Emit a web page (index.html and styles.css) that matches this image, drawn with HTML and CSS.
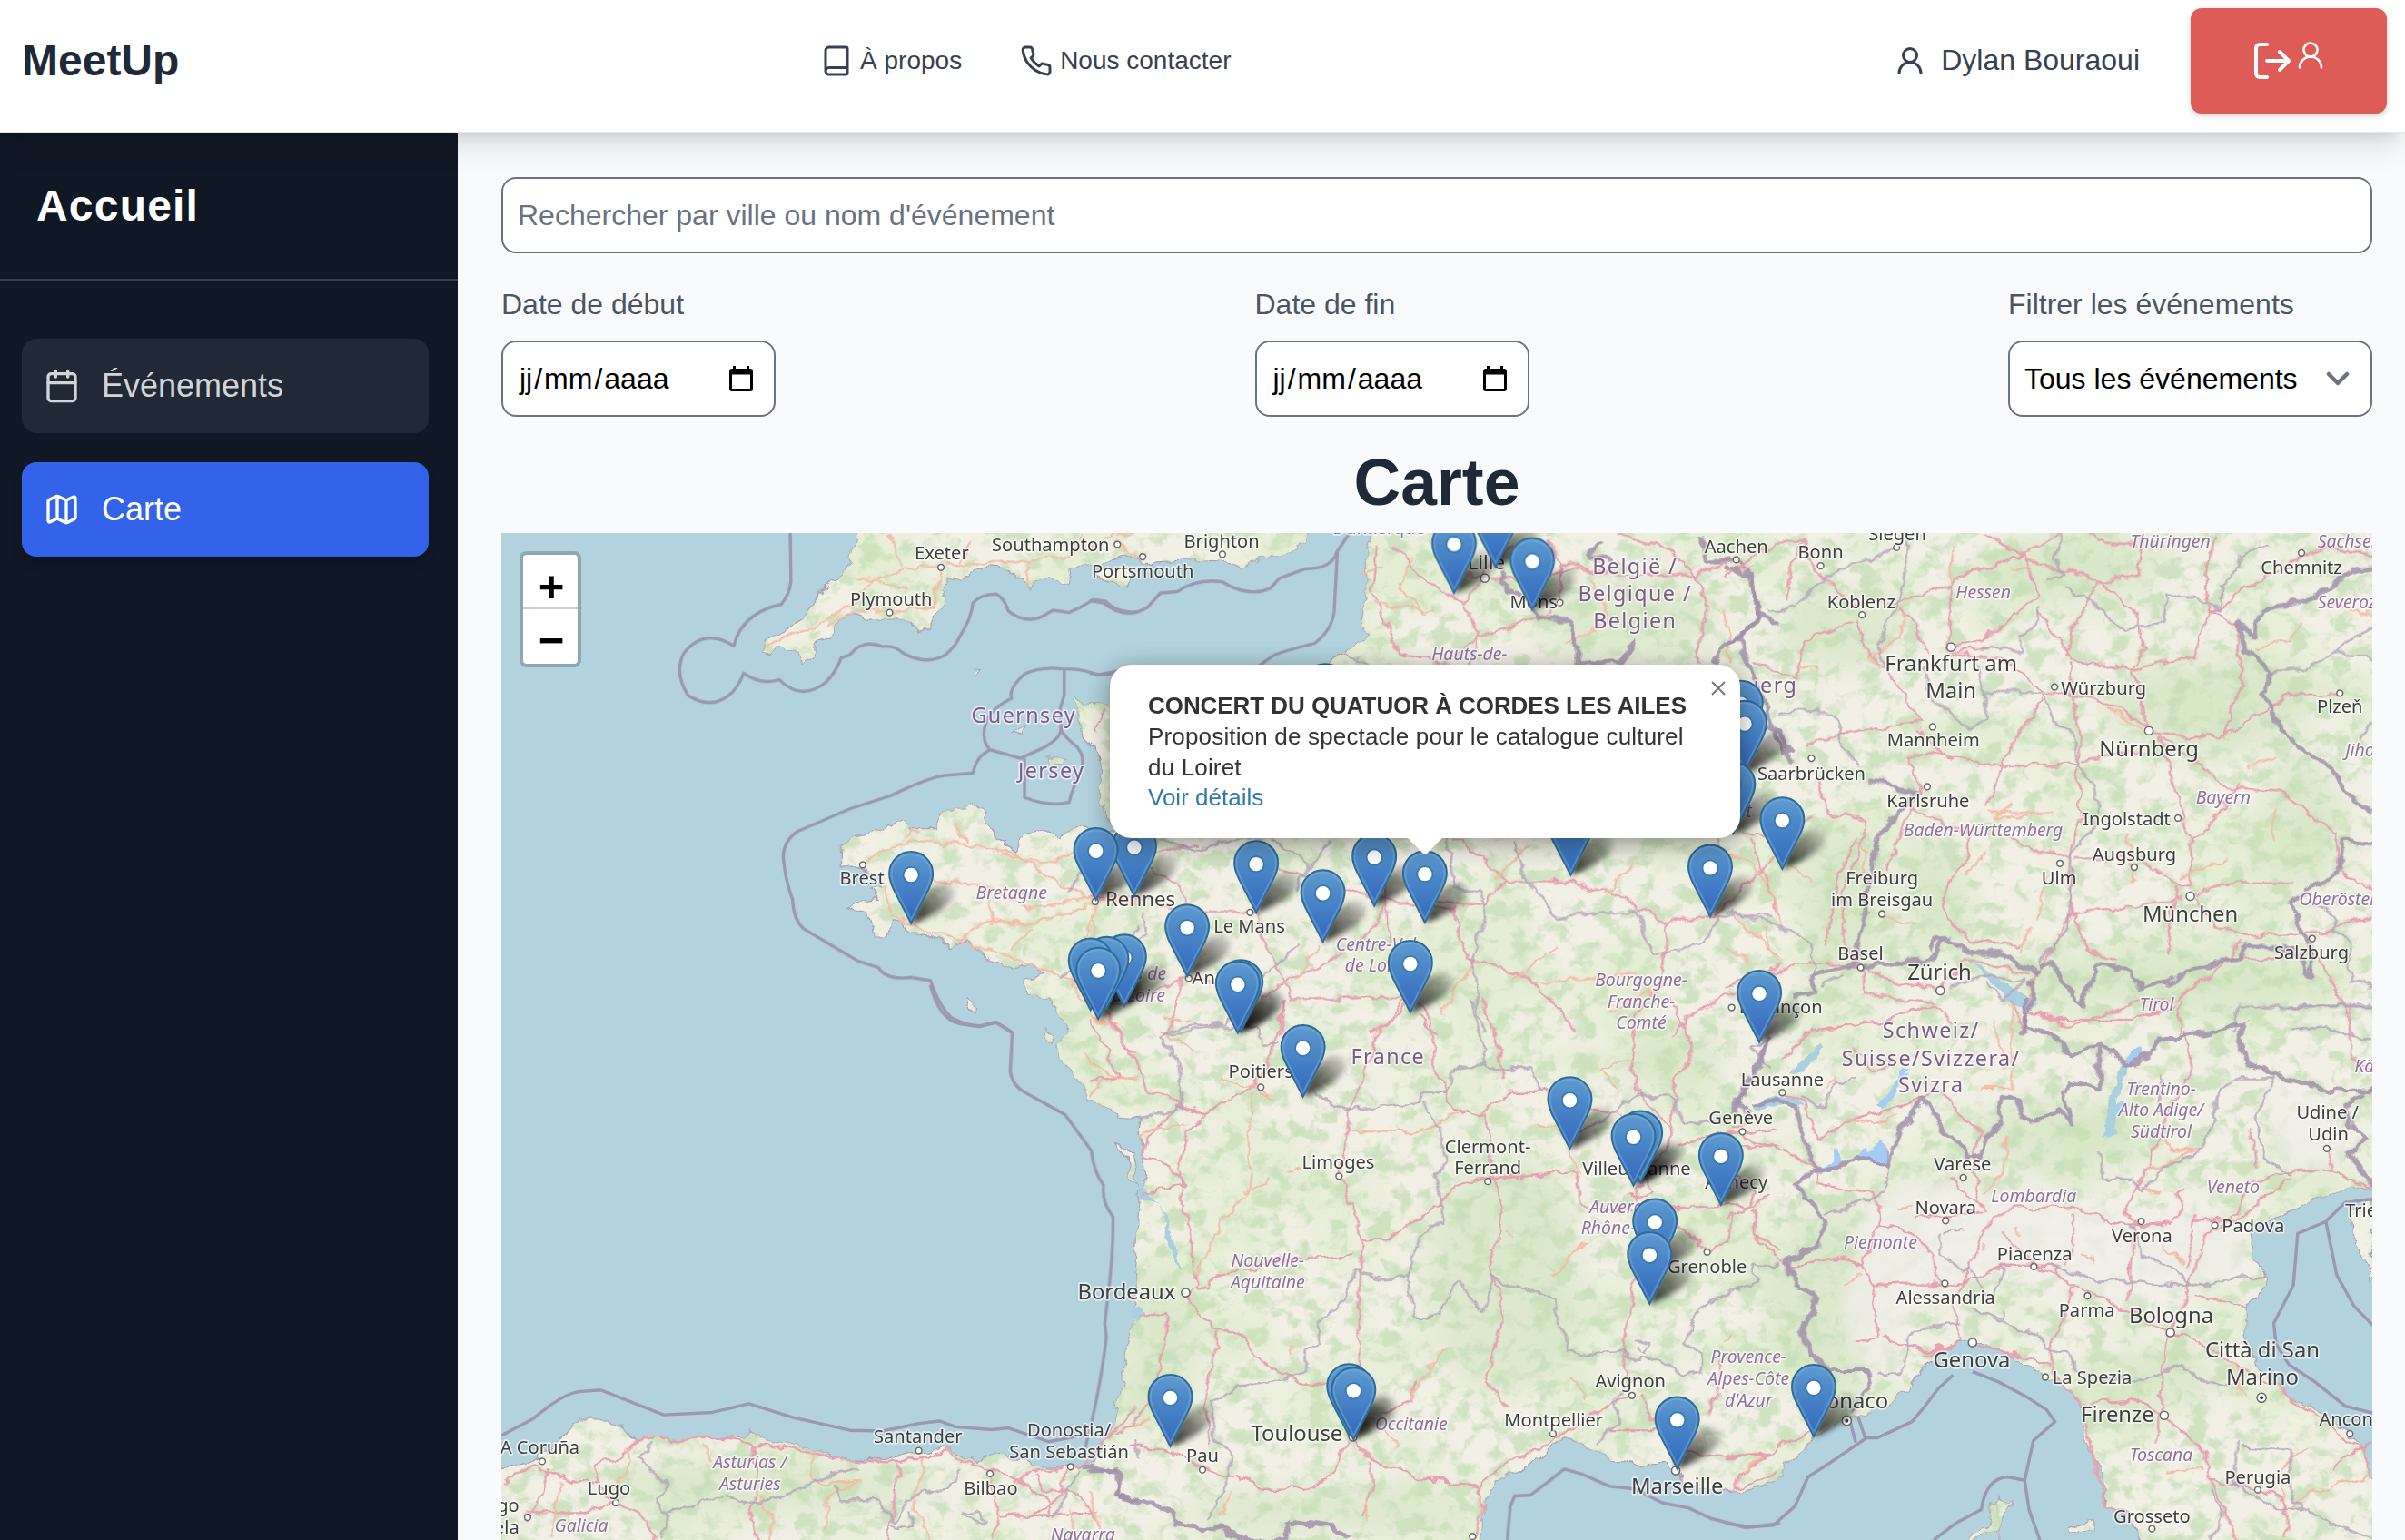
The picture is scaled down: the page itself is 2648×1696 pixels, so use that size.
FILE: index.html
```html
<!DOCTYPE html>
<html lang="fr">
<head>
<meta charset="utf-8">
<title>MeetUp – Carte</title>
<link rel="stylesheet" href="styles.css">
</head>
<body>
<header class="topbar">
  <div class="brand">MeetUp</div>
  <nav class="topnav">
    <a class="toplink"><svg class="icon" width="36" height="36" viewBox="0 0 24 24"><path d="M4 19.5v-15A2.5 2.5 0 0 1 6.5 2H19a1 1 0 0 1 1 1v18a1 1 0 0 1-1 1H6.5a1 1 0 0 1 0-5H20"/></svg>À propos</a>
    <a class="toplink"><svg class="icon" width="36" height="36" viewBox="0 0 24 24"><path d="M22 16.92v3a2 2 0 0 1-2.18 2 19.79 19.79 0 0 1-8.63-3.07 19.5 19.5 0 0 1-6-6 19.79 19.79 0 0 1-3.07-8.67A2 2 0 0 1 4.11 2h3a2 2 0 0 1 2 1.72 12.84 12.84 0 0 0 .7 2.81 2 2 0 0 1-.45 2.11L8.09 9.91a16 16 0 0 0 6 6l1.27-1.27a2 2 0 0 1 2.11-.45 12.84 12.84 0 0 0 2.81.7A2 2 0 0 1 22 16.92z"/></svg>Nous contacter</a>
  </nav>
  <div class="account">
    <div class="user"><svg class="icon" width="36" height="36" viewBox="0 0 24 24"><circle cx="12" cy="8" r="5"/><path d="M20 21a8 8 0 0 0-16 0"/></svg>Dylan Bouraoui</div>
    <button class="logout" aria-label="Déconnexion">
      <svg class="icon" width="48" height="48" viewBox="0 0 24 24"><path d="M9 21H5a2 2 0 0 1-2-2V5a2 2 0 0 1 2-2h4M16 17l5-5-5-5M21 12H9"/></svg>
      <svg class="icon thin" width="36" height="36" viewBox="0 0 24 24"><circle cx="12" cy="8" r="5"/><path d="M20 21a8 8 0 0 0-16 0"/></svg>
    </button>
  </div>
</header>
<div class="shell">
  <aside class="sidebar">
    <div class="side-head">Accueil</div>
    <nav class="side-nav">
      <a class="side-item"><svg class="icon" width="40" height="40" viewBox="0 0 24 24"><rect x="3" y="4" width="18" height="18" rx="2"/><path d="M16 2v4M8 2v4M3 10h18"/></svg>Événements</a>
      <a class="side-item active"><svg class="icon" width="40" height="40" viewBox="0 0 24 24"><path d="M14.106 5.553a2 2 0 0 0 1.788 0l3.659-1.83A1 1 0 0 1 21 4.619v12.764a1 1 0 0 1-.553.894l-4.553 2.277a2 2 0 0 1-1.788 0l-4.212-2.106a2 2 0 0 0-1.788 0l-3.659 1.83A1 1 0 0 1 3 19.381V6.618a1 1 0 0 1 .553-.894l4.553-2.277a2 2 0 0 1 1.788 0zM15 5.764v15M9 3.236v15"/></svg>Carte</a>
    </nav>
  </aside>
  <main class="content">
    <div class="field search">Rechercher par ville ou nom d'événement</div>
    <div class="filters">
      <div class="filter"><span class="label">Date de début</span>
        <div class="field date"><span><i>jj</i>/<i>mm</i>/<i>aaaa</i></span><svg width="26" height="28" viewBox="0 0 26 28"><path fill-rule="evenodd" d="M4 0h3v3h12V0h3v3h1a3 3 0 0 1 3 3v19a3 3 0 0 1-3 3H3a3 3 0 0 1-3-3V6a3 3 0 0 1 3-3h1zM3 9.500v15.500h20V9.500z"/></svg></div></div>
      <div class="filter"><span class="label">Date de fin</span>
        <div class="field date"><span><i>jj</i>/<i>mm</i>/<i>aaaa</i></span><svg width="26" height="28" viewBox="0 0 26 28"><path fill-rule="evenodd" d="M4 0h3v3h12V0h3v3h1a3 3 0 0 1 3 3v19a3 3 0 0 1-3 3H3a3 3 0 0 1-3-3V6a3 3 0 0 1 3-3h1zM3 9.500v15.500h20V9.500z"/></svg></div></div>
      <div class="filter"><span class="label">Filtrer les événements</span>
        <div class="field select"><span>Tous les événements</span><svg class="icon chevron" width="26" height="16" viewBox="0 0 26 16"><path d="M3 3l10 10L23 3"/></svg></div></div>
    </div>
    <h1>Carte</h1>
    <div class="map">
      <svg class="tiles" viewBox="326.86 347.59 1219.81 656.7" preserveAspectRatio="none">
        <defs>
          <filter id="rough" filterUnits="userSpaceOnUse" x="310" y="330" width="1260" height="700"><feTurbulence type="fractalNoise" baseFrequency=".09" numOctaves="3" seed="4"/><feDisplacementMap in="SourceGraphic" scale="8" xChannelSelector="R" yChannelSelector="G"/></filter>
          <filter id="woods" filterUnits="userSpaceOnUse" x="320" y="340" width="1235" height="670" color-interpolation-filters="sRGB"><feTurbulence type="fractalNoise" baseFrequency=".075 .09" numOctaves="5" seed="11"/><feColorMatrix values="0 0 0 0 .77  0 0 0 0 .87  0 0 0 0 .71  0 5 0 0 -2.4"/></filter>
          <filter id="plain" filterUnits="userSpaceOnUse" x="320" y="340" width="1235" height="670" color-interpolation-filters="sRGB"><feTurbulence type="fractalNoise" baseFrequency=".012 .015" numOctaves="3" seed="31"/><feColorMatrix values="0 0 0 0 .88  0 0 0 0 .93  0 0 0 0 .81  5 0 0 0 -2.3"/></filter>
          <filter id="soft" x="-50%" y="-50%" width="200%" height="200%"><feGaussianBlur stdDeviation="1.7"/></filter>
          <linearGradient id="pinfill" x1="0" y1="0" x2="0" y2="1"><stop offset="0" stop-color="#609cd1"/><stop offset=".35" stop-color="#4b88c8"/><stop offset="1" stop-color="#3268bd"/></linearGradient>
          <linearGradient id="shade" x1="0" y1="1" x2="1" y2="0"><stop offset="0" stop-opacity=".85"/><stop offset=".55" stop-opacity=".45"/><stop offset="1" stop-opacity=".05"/></linearGradient>
          <g id="pinshadow" transform="scale(1.184)"><path d="M0 0Q4-17 14-22Q23-25 24-18Q23-9 0 0z" fill="url(#shade)" filter="url(#soft)"/></g>
          <g id="pin" transform="scale(1.184)"><path d="M-12-27.700A12 12 0 0 1 12-27.700C12-24.500 10.800-21.500 9.600-19L0-.3-9.600-19C-10.800-21.500-12-24.500-12-27.700z" fill="url(#pinfill)" stroke="#2e6c97" stroke-width="1"/><path d="M-10.900-27.600A10.900 10.900 0 0 1 10.900-27.600C10.900-24.500 9.800-21.800 8.600-19.300L0-2.400-8.600-19.300C-9.800-21.800-10.900-24.500-10.900-27.600z" fill="none" stroke="#7fb2de" stroke-opacity=".45"/><circle cy="-27" r="4.300" fill="#fff" stroke="#3c79ae" stroke-width=".9"/></g>
          <path id="continent" d="M900 340L890 357L891 386L887 409L894 414L884 417L878 426L865 434L850 445L815 470L790 485L745 475L735 460L723 460L708 459L700 454L704 468L706 481L714 489L718 504L718 519L722 534L728 542L716 543L705 538L697 540L692 546L678 541L668 544L660 555L651 546L641 532L635 525L628 529L614 529L610 540L599 540L595 543L589 536L575 541L559 545L548 551L548 565L560 564L573 572L574 580L567 580L571 587L552 591L566 596L570 611L578 611L581 599L589 600L594 610L607 609L620 618L630 612L644 625L655 631L671 629L681 635L668 638L671 648L684 650L689 658L697 672L689 685L697 696L705 708L709 717L723 723L728 729L744 730L742 739L746 748L744 759L748 766L743 776L742 795L741 820L739 847L738 865L732 899L726 930L723 937L713 953L697 957L676 957L665 950L648 948L637 954L626 948L614 944L596 948L581 952L554 951L528 945L499 939L489 933L483 938L446 939L413 939L406 930L390 925L378 925L369 935L356 946L343 955L320 958V1015H964L967 980L977 964L990 960L1009 944L1019 938L1035 944L1052 953L1066 955L1084 955L1095 960L1098 969L1124 973L1142 971L1162 964L1165 953L1180 942L1193 930L1210 923L1230 917L1244 906L1255 890L1272 876L1286 874L1306 881L1323 892L1345 903L1358 917L1361 942L1371 960L1374 982L1388 987L1401 1015H1560V985L1547 964L1540 946L1532 933L1506 917L1484 906L1471 890L1465 872L1464 849L1473 845L1478 834L1468 818L1468 802L1481 795L1509 782L1526 777L1532 772L1555 778V340z"/>
          <path id="england" d="M560 340L555 367L542 382L534 386L530 395L512 412L499 417L497 427L503 427L508 422L519 425L523 433L531 427L532 420L541 415L548 404L557 400L570 404L585 403L595 407L600 412L606 412L608 403L615 394L614 384L619 378L631 375L644 370L656 371L668 378L672 386L674 379L684 378L696 381L699 375L696 372L716 369L735 362L745 367L762 366L780 365L797 366L811 370L824 364L840 360L851 353L857 340z"/>
          <path id="islands" d="M712 372L731 372L739 377L734 382L722 379zM634 436L638 437L635 440zM660 478L668 472L666 479zM683 494L694 494L693 499L684 498zM629 650L637 656L636 660L630 657zM681 671L685 674L686 681L682 677zM1532 790L1547 780V836L1537 812zM1311 980L1302 997L1278 1010H1304L1302 976zM1299 981L1303 980L1304 1010H1284L1286 1000L1296 996zM1349 996L1366 991L1366 998L1350 999zM728 745L738 751L742 773L737 770L736 757z"/>
          <clipPath id="landclip"><use href="#continent"/><use href="#england"/><use href="#islands"/></clipPath>
        </defs>
        <rect x="320" y="340" width="1235" height="670" fill="#b2d2dd"/>
        <g filter="url(#rough)">
          <g class="coast"><use href="#continent"/><use href="#england"/><use href="#islands"/></g>
          <g clip-path="url(#landclip)">
            <rect class="tex" x="320" y="340" width="1235" height="670" filter="url(#plain)"/>
            <g class="forest">
              <ellipse cx="755" cy="880" rx="24" ry="52"/><ellipse cx="1090" cy="690" rx="35" ry="18"/><ellipse cx="1200" cy="590" rx="20" ry="48"/><ellipse cx="1260" cy="580" rx="22" ry="34"/><ellipse cx="1440" cy="460" rx="70" ry="30"/><ellipse cx="1500" cy="535" rx="24" ry="45"/><ellipse cx="1350" cy="372" rx="60" ry="20"/><ellipse cx="1200" cy="410" rx="40" ry="26"/><ellipse cx="1420" cy="640" rx="110" ry="16"/><ellipse cx="980" cy="830" rx="50" ry="80"/><ellipse cx="1190" cy="850" rx="38" ry="60"/><ellipse cx="1340" cy="740" rx="55" ry="24"/><ellipse cx="1400" cy="900" rx="45" ry="20"/><ellipse cx="860" cy="985" rx="90" ry="14"/><ellipse cx="500" cy="970" rx="110" ry="16"/><ellipse cx="1060" cy="400" rx="60" ry="22"/>
            </g>
            <rect class="tex" x="320" y="340" width="1235" height="670" filter="url(#woods)"/>
            <path class="po" d="M1215 790L1245 770L1330 780L1400 790L1460 790L1465 830L1400 850L1310 830L1250 850L1225 905L1200 860zM1490 700L1540 745L1520 765L1480 755z"/>
          </g>
          <path class="water" d="M743 773Q760 785 764 805T771 829Q762 822 760 800T743 783zM735 852l8-1 5 6-8 6zM1374 722l10-30 3 2-6 24-2 22-7-1zM1282 623l20 14 18 13 8 3-2 5-12-1-18-20zM1142 722q14-12 30-6l4 6q-15-5-32 4zM1167 700l20-20 3 3-14 16z"/>
          <path class="ice" d="M1383 692l12-9 4 6-12 7zM1222 718l12-8 8-14 3 1-8 16-10 9zM1180 762l14-5 4-8 3 3-2 8-14 5zM1210 757l6-10 3 5 8-8 4 8-3 8zM1378 724l6-8 2 2-4 10z"/>
        </g>
        <g filter="url(#rough)">
          <!-- Channel and Brittany -->
          <g transform="translate(326.9 343.4) scale(.26436 .21148)">
            <path class="road" d="M1568 0L1520 30L1400 90L1250 110L1100 120M1090 120L1000 125L920 165L860 240L770 310L690 345L650 375M1090 130L1060 250L970 265L880 255L800 310M960 20L985 120M1120 120L1160 40M1305 120L1300 190M1400 95L1440 30M1520 40L1568 100M870 150L1000 200M890 1040L940 1000L1020 970L1120 975L1250 1000L1350 1080L1460 1150L1568 1160M1060 1090L1200 1110L1300 1180L1460 1140M960 1190L1010 1230L1130 1275L1200 1215L1300 1225L1460 1160M1250 1000L1240 1010L1330 1040L1400 1020L1430 980M1110 910L1150 970M1130 1275L1220 1310L1280 1340L1400 1400L1440 1470M1250 1310L1310 1240M1460 1170L1465 1290M1470 1160L1440 1260L1420 1360M1000 960L1030 940M940 1090L960 1180M1200 1110L1210 1230"/>
            <path class="admin" d="M1420 960L1430 1060L1400 1130M1568 1230L1520 1330L1400 1370L1380 1400"/>
          </g>
          <!-- Northern France and Belgium -->
          <g transform="translate(710.6 343.4) scale(.287 .21148)">
            <path class="major" d="M650 60L640 200L680 330L700 380L820 430M850 240L760 170L690 60M850 240L900 130L960 60M850 245L880 330L860 430M1030 280L900 330L800 420M850 150L1000 170L1100 130L1200 150L1380 150M1040 40L1070 110L1200 150M1380 150L1400 250L1380 420M1460 100L1380 150L1300 60L1200 20M1070 110L1060 250L1020 290M830 960L880 1010L940 1090L1100 1100L1200 1140L1310 1220L1420 1200L1568 1000M940 1090L900 1170L760 1150M825 1170L830 1250L860 1330L960 1370L1020 1420L1100 1550M830 1180L700 1160L560 1110L450 1060L380 1040M380 1190L250 1190L120 1150L0 1140M670 960L675 1160L640 1250L540 1340L460 1400L380 1450M675 1160L680 1300M380 1190L390 1280L440 1400L460 1460L620 1450L720 1450M390 1440L300 1420L220 1390L60 1480M210 1390L180 1568M440 1460L430 1568M1310 1220L1300 1400L1240 1500L1230 1568M1410 1190L1440 1080L1420 960M730 1440L640 1568M740 1450L790 1568M1330 1568L1370 1500L1460 1440L1568 1350M1500 960L1540 1100L1568 1200M20 1060L130 1010L250 980M30 560L10 640M220 1180L200 1100L120 1040"/>
            <path class="road" d="M660 120L610 150M730 100L700 180L760 270M640 240L780 260M1140 160L1180 300L1080 360M1440 250L1460 420M920 1090L1000 980M1160 1140L1240 1040M1030 1410L1240 1380M880 1330L800 1500M1460 1200L1568 1330M520 1290L470 1400M1060 1290L960 1400M1180 1500L1290 1420M40 1300L0 1280"/>
            <path class="admin" d="M585 390L650 440M130 960L240 1000L330 960L420 960L500 1050L470 1120L500 1060L540 960M960 960L980 1060L1060 1210L1240 1180L1280 1320L1400 1280L1430 1200L1550 1200M810 960L830 1120L890 1120M890 1120L900 1200L870 1320L880 1500L900 1568M120 1190L130 1260L60 1300M360 1440L420 1340L470 1290M380 1540L280 1540L170 1568"/>
            <path class="country" d="M930 60L940 180L1000 230L1020 280L1090 290L1110 370L1110 440M1110 420L1200 420L1240 350L1200 440M1420 430L1440 360L1480 340L1520 270L1500 150L1470 100L1400 110L1390 30M1568 300L1520 270M1160 40L1140 90L1180 110"/>
          </g>
          <!-- Germany and northern Switzerland -->
          <g transform="translate(1125.1 343.4) scale(.2825 .21148)">
            <path class="major" d="M0 160L60 90L180 30L200 130L290 240L410 230L520 180L530 160L680 90L780 20M180 30L150 130L140 230M300 280L320 370L370 440L430 560L450 600L350 620L260 640L190 680M290 290L180 350L170 460L60 420M400 250L440 300L470 400M520 180L515 280L510 370L590 350L720 220L690 90L600 20M510 390L620 370M690 100L860 170L960 150L960 20M720 270L770 340L790 410L940 440L1080 400L1120 260L1110 150L1130 20M520 390L640 410L740 510L850 530L960 600L1000 640L1140 650L1180 620L1250 560L1300 515L1420 520M730 530L650 700L635 750L600 870M640 740L500 700L420 710L450 800L400 960L370 1060M790 420L800 540L820 640L810 740L820 900L790 1020L720 1000L650 950M810 730L640 740M820 720L960 690M860 170L800 320L780 400M870 170L950 270L970 380L940 440L960 560L980 630M1000 650L1050 860L1075 970L1080 1100L1050 1110L950 1020L800 1020M1000 650L1100 740L1170 810L1280 820L1410 950L1420 1060L1493 1120M1180 800L1100 950L1075 970M500 700L440 620M430 870L560 950L560 1020L510 1100L500 1180L560 1280L680 1290M1080 1130L1150 1100L1310 1095M1080 1140L1130 1230L1220 1260L1400 1250L1430 1215L1493 1210M1040 1110L1020 1320M800 1190L960 1170L1050 1150M790 1020L800 1190L760 1280L700 1410L700 1500M800 1190L840 1310L900 1340M210 780L240 890L330 900L310 1000L270 1120L270 1260L300 1350L380 1400L490 1430L560 1330L700 1380M1120 260L1180 300L1190 480L1150 650M1120 270L1200 190L1320 100L1380 60L1493 90M840 20L900 60L950 50M40 940L100 960L200 900M300 960L260 1080L230 1290M0 1420L100 1380L200 1340L310 1360L320 1440L480 1470L520 1540M700 1500L800 1540L960 1460L1040 1460L1160 1340L1190 1280M1050 1460L1050 1568M1350 1290L1400 1400L1450 1568M660 1460L690 1568M1150 1340L1340 1320"/>
            <path class="road" d="M60 120L0 140M410 270L400 340L330 400L360 440M530 60L520 180M700 120L660 130M880 560L960 620M220 440L170 430M1330 290L1300 350L1220 380M1493 270L1400 240M660 850L620 900L750 880M600 1000L550 1080M740 1080L720 1220M930 950L940 1100M610 880L760 880M1200 740L1280 720M1270 870L1260 960M0 1000L60 1040L120 1160L130 1240M300 980L330 1000L310 1080M80 1240L120 1340M0 1300L60 1340M700 1240L680 1310M360 1200L440 1230M1160 1020L1050 1080M150 1040L200 1090"/>
            <path class="admin" d="M420 30L410 200L350 380L370 430M100 260L160 250L210 180L270 120L330 110L400 60M780 20L760 90L780 150L740 160M780 190L850 240L920 320L1010 290L1020 210L1120 230L1140 260M720 250L720 300L680 340L680 380L590 370M460 430L470 520L560 620L600 600L600 520L580 430M600 510L730 510L760 600L800 640L810 730L850 800L860 920L790 1010L800 1060L790 1240L720 1340M130 580L200 560L260 600L270 680L310 740M0 1190L100 1220L200 1290L200 1380M1260 450L1350 430L1410 380L1493 410M1410 380L1493 310M1490 590L1470 660M1350 1170L1410 1200L1400 1250L1440 1280L1440 1400L1493 1420M1130 260L1150 180L1200 80L1250 60M1180 1480L1170 1568M1493 1480L1180 1480M520 1420L600 1380L690 1400L640 1460L600 1400M280 1380L220 1420"/>
            <path class="country" d="M0 120L50 150L80 260L40 330L40 410L80 500L100 600L150 730M330 780L440 820L350 950L320 1180L300 1350L200 1380L200 1440L160 1450M310 1360L420 1340L470 1340L500 1270L560 1310L640 1320L720 1380M470 1300L480 1270L520 1270M720 1350L750 1340L800 1440L820 1480L860 1350L940 1370L960 1420L1020 1410L1080 1360L1190 1340L1200 1290L1310 1310L1350 1390L1350 1290L1300 1160L1420 1050L1430 970L1493 980M1180 290L1200 380L1260 450L1240 520L1300 660L1400 750L1430 820L1493 880M1180 290L1220 340L1240 260L1360 220L1440 140L1493 120M700 1400L710 1450L680 1568M150 700L130 640L80 600M0 350L40 350"/>
          </g>
          <!-- Galicia to the Basque coast -->
          <g transform="translate(326.9 651.4) scale(.26436 .22507)">
            <path class="major" d="M0 1410L80 1350L110 1370L120 1360L80 1480L60 1510M120 1370L170 1400L240 1400L230 1350L300 1330L330 1280L540 1275L620 1290L700 1300L860 1335L980 1345L1100 1310L1200 1370L1280 1400L1320 1370L1430 1350L1500 1270L1568 1180M60 1490L200 1490L270 1460L340 1490L380 1568M620 1290L630 1440L610 1510L640 1568M980 1350L970 1450L950 1568M1200 1370L1230 1470L1210 1568M1320 1380L1340 1430L1430 1430L1470 1520M1230 1500L1470 1490M240 1400L270 1460M1390 1370L1380 1440L1300 1500M1280 1400L1350 1450L1350 1500"/>
            <path class="road" d="M500 1290L520 1340M640 1440L670 1520L660 1568M760 1310L760 1400L880 1400L800 1450L800 1540M1040 1330L1020 1470L1060 1568M1420 1568L1400 1480M310 1300L320 1340L260 1440M150 1400L120 1568M1430 160L1500 220L1568 240M1450 280L1480 240L1568 230M1450 50L1520 80"/>
            <path class="admin" d="M370 1290L340 1330L410 1410L380 1450L410 1500L390 1568M410 1490L550 1440L620 1460L700 1440L790 1390L880 1360M820 1410L840 1450L930 1450L970 1520L1000 1450L1120 1400L1140 1360M960 1530L1020 1530L1010 1480M1360 1500L1400 1420L1430 1360M1140 1500L1190 1520L1180 1480L1140 1500M1568 1280L1568 1330"/>
            <path class="country" d="M1440 1350L1500 1370L1530 1380L1510 1440L1568 1450"/>
            <path class="major" d="M1490 40L1530 130L1568 160"/>
          </g>
          <!-- Central and southern France -->
          <g transform="translate(710.6 651.4) scale(.287 .22507)">
            <path class="major" d="M40 50L80 130L110 190L130 270L210 310L260 330L370 260L410 180L440 0M260 330L220 400L200 530L230 700L240 830L220 860L280 950L340 970L380 1040L480 1110L590 1120L610 1060L610 900L620 700L570 510L590 330L660 80L720 20M740 40L780 90L780 200L830 320L890 340L910 380L910 490L940 620L910 780L940 870L930 970L900 1110L950 1180M880 340L950 270L1040 270L1180 330M620 700L690 690L800 590L840 530L900 520L1100 500M600 740L400 760L370 790L280 800L270 840L240 840M590 1280L550 1370L500 1420L390 1420L350 1390L260 1360L180 1310L90 1290M600 1280L640 1340L750 1390L880 1410L960 1340L1060 1270L1150 1200L1230 1150L1210 1030L1230 870L1260 700L1240 550L1310 440L1320 380L1240 270L1230 150L1240 60M1320 0L1340 60L1370 150L1330 240L1320 380M1330 430L1400 400L1480 390L1568 380M1250 610L1430 600L1510 600L1540 570M1300 620L1380 700L1410 730L1450 700L1460 620M1100 500L1120 600L1240 620M1250 1150L1270 1200L1330 1310L1530 1330M1180 1250L1310 1250M170 910L170 1000L140 1150L100 1230L60 1260M290 950L280 1060L260 1130L270 1290M110 925L170 910M880 1410L890 1480L870 1568M630 1350L640 1420L620 1500M1480 390L1510 420L1568 430M1510 610L1510 680L1568 730M1230 570L1280 560L1270 520M0 60L70 230L0 240M890 0L920 90L940 240M1400 1200L1430 1150L1430 1040M1568 1370L1460 1420M210 300L130 400L120 460L180 480L210 540L120 560M660 1200L730 1160L740 1110"/>
            <path class="road" d="M160 90L240 160M170 60L230 60M370 280L360 560L300 640L240 800M350 560L410 520M590 380L730 385L780 370L840 330M110 400L140 375L220 370M300 220L420 290M410 280L380 250M730 1160L780 1050L810 1010M460 1000L460 1030M640 1210L700 1300M1090 1100L1130 1160M1090 440L1110 510M1010 370L1060 380M1200 260L1160 200L1230 180M1130 700L1060 790L1050 800M940 670L960 690M20 1540L0 1420M320 1430L300 1500M100 1235L140 1215M630 1440L630 1520M1170 330L1210 340M480 490L450 500"/>
            <path class="admin" d="M160 110L210 80L310 70L320 50L380 80L390 130L430 130M160 110L200 180L210 310L140 340L100 350M510 270L550 310L600 320L750 300L760 270L810 270L820 210L900 180L940 210L1000 200L1030 270M760 300L760 330L800 370L810 460L780 510L800 580L800 660L770 660L740 720L720 790L740 920L790 920L840 820L890 910L920 810L960 830L1040 860L1060 920L1090 1020L1150 1030L1200 1020L1240 1050L1290 1040L1350 1090L1390 1080L1390 1030L1350 1000L1390 890L1420 870L1520 820L1500 770L1568 770M720 800L660 810L600 790L580 870L520 940L520 1000L490 1020L490 1080L420 1110L330 1130L280 1170L280 1280L310 1300L320 1370L270 1510M900 180L880 90L870 0M1240 990L1270 1000L1260 1030L1240 1010M1060 380L1120 390L1170 350L1240 280L1310 280L1350 360L1380 360L1440 340M1150 1290L1200 1220L1200 1150L1240 1100"/>
            <path class="country" d="M0 1370L60 1370L60 1440L180 1480L200 1520L300 1540L370 1568L450 1568L450 1510L550 1530L590 1568M1460 330L1470 300L1510 200L1540 130"/>
          </g>
          <!-- Alps and northern Italy -->
          <g transform="translate(1125.1 651.4) scale(.2825 .22507)">
            <path class="major" d="M0 630L60 600L70 560L0 480M20 430L110 430L170 460L220 500M60 340L20 380M130 180L200 90L290 80L380 60L480 20M130 270L180 290L210 410L290 350L460 290L480 250M290 130L340 210L380 200M690 30L760 60L940 60L1040 20M1060 90L1080 200L1020 330L980 480L920 620L960 660L1030 650L1060 600L1040 560L1060 550M1440 10L1440 160L1493 210M200 490L220 540L340 560L360 650L430 680L480 740L490 820L550 825L600 660L650 610L800 600L890 650L1020 655M360 650L310 770L250 750L150 780L70 700L60 610M310 770L340 830L400 825L490 825M340 830L350 980L300 990M360 980L460 1020L540 990L520 880L550 825L640 770L770 770L760 800L890 880L980 940L1100 1000L1200 1080L1300 1150L1400 1240L1470 1310L1493 1390M640 680L710 770L810 830L770 940L750 1020L760 1100L820 1170L930 1160L1000 1200L1020 960M1030 960L1070 830L1110 680L1140 660L1180 630L1200 540L1300 500L1390 490L1493 550M940 640L930 880M1080 620L1070 780M1080 640L1180 650L1250 570L1310 520M830 1190L850 1330L880 1470L920 1490M1000 1200L1000 1280M1010 1210L1060 1260L1110 1320L1120 1390L1150 1480L1180 1568M1120 1390L1230 1420L1290 1450L1290 1560M800 620L800 730L780 770M430 640L590 620M590 390L570 440L580 560L600 620M520 520L560 570L600 600M20 1420L30 1380L100 1320L200 1250M0 1330L100 1320M460 1030L520 1000M560 1000L640 1020L750 1060M1390 440L1400 490M1210 380L1220 490M480 250L540 330L590 390M1493 1280L1400 1360M1080 860L1200 890"/>
            <path class="road" d="M280 350L340 360L400 340M660 20L660 260L590 260M650 390L640 500L600 560M990 380L1040 440L1080 440L970 500M1350 1300L1280 1360L1290 1450M1010 1370L1100 1360M400 610L430 600M270 830L310 800M620 60L640 200M960 550L1000 560M600 710L590 730M670 660L680 690M850 760L820 740M1010 710L1060 770M1493 1380L1350 1430L1300 1480M1170 1050L1200 1150M1030 440L1100 430M0 990L20 980M250 220L230 260M40 1370L80 1330"/>
            <path class="admin" d="M100 200L60 140L100 120M180 280L230 320L250 240L300 230M370 430L370 560L230 630M490 680L500 740L550 790L570 770M500 680L550 670M570 780L590 850L620 860L640 770M570 900L640 930L640 900M430 960L500 950L540 940M430 960L410 1060L400 1080L350 1090M620 930L720 970L740 1010L790 1030L820 1080L880 1100L940 1110L1000 1090L1050 1060L1100 1110L1170 1120M860 440L880 520L940 520L960 560L1010 480L1070 460L1100 430L1130 350L1130 290L1170 230L1270 230M1270 230L1220 340L1240 460L1310 510M930 650L960 740L1040 790L1080 830L1180 810L1250 805M750 770L860 820L900 815L1080 830M1180 1280L1170 1400L1250 1470L1340 1480M1190 1300L1300 1310L1310 1440L1340 1480L1400 1520L1493 1568M1120 1568L1150 1500L1120 1420M1000 220L1000 330M1300 100L1380 80L1493 120M1500 20L1300 20"/>
            <path class="country" d="M100 110L80 200L40 240L30 310L60 340M60 310L120 290L160 310L180 420L210 490L250 490L300 460L370 480L410 370L460 290L490 360L540 420L560 460L590 450L600 400L630 360L640 290L670 290L690 350L740 340L770 320L800 370L780 270L800 240L860 260L860 130L800 160L760 110L690 80L690 0M860 130L900 160L920 190L960 180L1000 120L1110 100L1200 70L1180 110L1210 190L1290 230L1380 260L1493 270M210 490L160 540L200 590L230 660L210 720L140 760L160 830L200 850L210 900L180 950L190 1010L240 1080L330 1080L330 1120L290 1200M1480 280L1430 310L1440 370L1480 400L1440 450L1460 490L1493 540"/>
          </g>
        </g>
        <!-- Territorial waters -->
        <g transform="translate(326.9 343.4) scale(.26436 .21148)"><path class="sea" d="M712 0L714 170Q710 210 690 240Q610 260 580 340L573 368Q500 310 450 390Q425 450 460 520Q520 570 570 510Q590 480 597 452Q640 490 685 472Q740 540 800 480Q825 450 838 405L860 395Q890 345 940 370Q970 365 990 390Q1050 430 1095 395Q1120 370 1130 340Q1160 280 1163 235Q1180 210 1220 208Q1240 220 1250 260Q1300 310 1350 265L1360 258L1400 265Q1430 250 1460 225L1490 230Q1520 270 1568 262M1568 450L1520 445L1470 458Q1430 435 1387 440Q1330 430 1290 455Q1250 500 1258 530Q1190 570 1190 640Q1190 670 1205 688L1280 715L1340 680Q1380 650 1380 625L1378 560L1388 520V440M1205 688Q1170 710 1163 760L1090 768Q1050 775 960 830L860 870L730 940Q695 970 695 1020Q700 1090 718 1150Q720 1210 745 1240L880 1340L930 1360Q950 1400 1010 1390L1058 1400Q1080 1480 1110 1515Q1150 1540 1180 1540L1220 1528L1260 1560M1378 625Q1390 650 1420 680Q1440 710 1430 750Q1410 800 1400 850Q1350 865 1290 835V715"/></g>
        <g transform="translate(710.6 343.4) scale(.287 .21148)"><path class="sea" d="M0 228L30 235Q80 290 130 250L160 205L200 200Q240 160 300 170Q360 220 410 190L430 160L490 130Q550 130 560 80Q580 40 600 0M562 80L555 260Q550 320 510 360Q450 380 420 395Q380 430 370 450M0 452Q40 465 80 440"/></g>
        <g transform="translate(326.9 651.4) scale(.26436 .22507)"><path class="sea" d="M1058 -40Q1080 60 1130 72L1180 80L1220 68L1260 98L1255 210Q1260 250 1290 270L1390 335L1455 440Q1460 500 1485 540Q1480 590 1508 630Q1510 700 1500 820L1488 940L1492 980Q1480 1100 1455 1230L1440 1300M0 1265L80 1215Q150 1145 190 1138L245 1133L400 1205L520 1198L610 1173L720 1213L860 1250L940 1252L1030 1230L1080 1223L1120 1240L1210 1248L1250 1243L1350 1283L1450 1260"/></g>
        <g transform="translate(710.6 651.4) scale(.287 .22507)"><path class="sea" d="M948 1568L955 1470L965 1440L1000 1438L1040 1400L1078 1362L1120 1378L1180 1412L1240 1420L1300 1460L1360 1475L1410 1505L1490 1532L1568 1520"/></g>
        <g transform="translate(1125.1 651.4) scale(.2825 .22507)"><path class="sea" d="M0 1520L60 1530L110 1525L160 1470L190 1385L240 1345L325 1272L350 1272L430 1225L460 1180L490 1130L525 1090M570 1080L630 1110L690 1150L740 1190L760 1225L710 1280L690 1395L700 1480L725 1568M480 1568L530 1520L590 1480Q600 1390 650 1385L690 1395M285 1215L300 1285M305 1210L322 1272M1493 580L1430 590L1385 645L1320 680L1310 830L1265 940L1270 1000L1300 1060L1360 1110L1430 1180L1493 1200M1385 645L1410 800L1450 890L1493 945"/></g>

        <g class="dot"><circle cx="613.500" cy="370" r="2"/><circle cx="728.500" cy="355" r="2"/><circle cx="745" cy="363" r="2"/><circle cx="797" cy="361.500" r="2"/><circle cx="580" cy="399.500" r="2"/><circle cx="562.500" cy="564" r="2"/><circle cx="968" cy="377" r="2.700"/><circle cx="1017" cy="393" r="2"/><circle cx="1132" cy="365" r="2"/><circle cx="1187" cy="369" r="2"/><circle cx="1236.500" cy="357" r="2"/><circle cx="1214" cy="401" r="2"/><circle cx="1272" cy="422" r="2.700"/><circle cx="1339.500" cy="448" r="2"/><circle cx="1260" cy="474" r="2"/><circle cx="1401" cy="476.500" r="2.700"/><circle cx="1525.500" cy="452" r="2"/><circle cx="1500.500" cy="360.500" r="2"/><circle cx="1181" cy="494.500" r="2"/><circle cx="1256.500" cy="513" r="2"/><circle cx="1420" cy="533.500" r="2"/><circle cx="1343" cy="563" r="2"/><circle cx="1391.500" cy="565.500" r="2"/><circle cx="1428" cy="584.500" r="2.700"/><circle cx="1227" cy="596" r="2"/><circle cx="1213" cy="631" r="2"/><circle cx="1265" cy="646" r="2.700"/><circle cx="1507.500" cy="612" r="2"/><circle cx="1129" cy="657" r="2"/><circle cx="815" cy="595" r="2"/><circle cx="714" cy="588" r="2"/><circle cx="775" cy="638" r="2"/><circle cx="822" cy="709" r="2"/><circle cx="873" cy="767" r="2"/><circle cx="970" cy="770.500" r="2"/><circle cx="1136" cy="738" r="2"/><circle cx="1162" cy="712.500" r="2"/><circle cx="1113" cy="816.500" r="2"/><circle cx="773" cy="843" r="2.700"/><circle cx="784" cy="958.500" r="2"/><circle cx="882" cy="937" r="2.700"/><circle cx="1064" cy="910" r="2"/><circle cx="1012.500" cy="935" r="2"/><circle cx="1092.500" cy="959" r="2.700"/><circle cx="353.500" cy="953" r="2"/><circle cx="401.500" cy="980" r="2"/><circle cx="344" cy="989.500" r="2"/><circle cx="599" cy="946" r="2"/><circle cx="645.500" cy="961" r="2"/><circle cx="698" cy="956.500" r="2"/><circle cx="960" cy="1002" r="2"/><circle cx="1280" cy="768" r="2"/><circle cx="1268.500" cy="796" r="2"/><circle cx="1268" cy="837" r="2"/><circle cx="1326" cy="826" r="2"/><circle cx="1361" cy="845" r="2"/><circle cx="1396" cy="796.500" r="2"/><circle cx="1444" cy="799" r="2"/><circle cx="1415" cy="869" r="2.700"/><circle cx="1286" cy="875.500" r="2.700"/><circle cx="1333.500" cy="898" r="2"/><circle cx="1411" cy="923" r="2.700"/><circle cx="1472" cy="971.500" r="2"/><circle cx="1403" cy="997" r="2"/><circle cx="1517" cy="749" r="2"/><circle cx="1532" cy="935" r="2"/><circle cx="1204" cy="926.500" r="3"/><circle cx="1474.500" cy="911.500" r="3"/></g>
        <circle cx="1204" cy="926.500" r="1.200" fill="#444"/><circle cx="1474.500" cy="911.500" r="1.200" fill="#444"/>

        <g class="labels">
        <g class="city">
          <text x="614" y="365">Exeter</text><text x="685" y="359.500">Southampton</text><text x="796.500" y="357">Brighton</text><text x="745" y="376.500">Portsmouth</text><text x="581" y="395">Plymouth</text><text x="562" y="577">Brest</text>
          <text x="743.500" y="591" class="mid">Rennes</text><text x="814.500" y="608">Le Mans</text><text x="797" y="642">Angers</text><text x="822" y="703">Poitiers</text><text x="872.500" y="762">Limoges</text><text x="970" y="752">Clermont-</text><text x="970" y="765.500">Ferrand</text><text x="1067" y="766">Villeurbanne</text><text x="1132" y="775">Annecy</text><text x="1113" y="830">Grenoble</text><text x="1135" y="733">Genève</text><text x="1162" y="708">Lausanne</text><text x="1161" y="661">Besançon</text>
          <text x="1063" y="905">Avignon</text><text x="1013" y="930">Montpellier</text><text x="784" y="953.500">Pau</text><text x="697" y="937">Donostia/</text><text x="697" y="951">San Sebastián</text><text x="598.500" y="941">Santander</text><text x="646" y="974.500">Bilbao</text><text x="397" y="974.500">Lugo</text><text x="352" y="948">A Coruña</text><text x="338.500" y="986" text-anchor="end">Santiago</text><text x="338.500" y="1000" text-anchor="end">Compostela</text>
          <text x="1000" y="397">Mons</text><text x="969" y="371" class="mid">Lille</text><text x="1132" y="360.500">Aachen</text><text x="1187" y="364">Bonn</text><text x="1237" y="352.500">Siegen</text><text x="1213.500" y="396.500">Koblenz</text><text x="1371.500" y="453">Würzburg</text><text x="1500.500" y="374.500">Chemnitz</text><text x="1525.500" y="465">Plzeň</text><text x="1260.500" y="487">Mannheim</text><text x="1181" y="508.500">Saarbrücken</text><text x="1257" y="526.500">Karlsruhe</text><text x="1386.500" y="538.500">Ingolstadt</text><text x="1391.500" y="561.500">Augsburg</text><text x="1342.500" y="577">Ulm</text><text x="1227" y="577">Freiburg</text><text x="1227" y="591">im Breisgau</text><text x="1213" y="626">Basel</text><text x="1507" y="625.500">Salzburg</text>
          <text x="1279.500" y="763">Varese</text><text x="1268.500" y="791.500">Novara</text><text x="1268.500" y="850.500">Alessandria</text><text x="1326.500" y="822">Piacenza</text><text x="1396.500" y="810">Verona</text><text x="1469" y="803.500">Padova</text><text x="1360.500" y="858.500">Parma</text><text x="1364" y="902.500">La Spezia</text><text x="1472" y="967.500">Perugia</text><text x="1403" y="993">Grosseto</text><text x="1517.500" y="729.500">Udine /</text><text x="1518" y="743.500">Udin</text><text x="1529" y="793.500" text-anchor="start">Trieste</text><text x="1512" y="929.500" text-anchor="start">Ancona</text>
        </g>
        <g class="city big">
          <text x="1272" y="437.500">Frankfurt am</text><text x="1272" y="455.500">Main</text><text x="1401" y="493.500">Nürnberg</text><text x="1428" y="601">München</text><text x="1264.500" y="639">Zürich</text><text x="734.500" y="847.500">Bordeaux</text><text x="845.500" y="940">Toulouse</text><text x="1093.500" y="974">Marseille</text><text x="1204.500" y="918.500">Monaco</text><text x="1285.500" y="892">Genova</text><text x="1415.500" y="862.500">Bologna</text><text x="1475" y="885">Città di San</text><text x="1475" y="903">Marino</text><text x="1380.500" y="927.500">Firenze</text>
        </g>
        <g class="nation">
          <text x="667.500" y="471.500">Guernsey</text><text x="685.500" y="507.500">Jersey</text><text x="1066" y="374.500">België /</text><text x="1066" y="392">Belgique /</text><text x="1066" y="410">Belgien</text><text x="905" y="694">France</text><text x="1172" y="452" text-anchor="end">uerg</text><text x="1259" y="677">Schweiz/</text><text x="1259" y="695">Suisse/Svizzera/</text><text x="1259" y="712.500">Svizra</text>
        </g>
        <g class="region">
          <text x="659.500" y="586">Bretagne</text><text x="958" y="430.500">Hauts-de-</text><text class="upright" x="899" y="348">Dunkerque</text><text x="897" y="620">Centre-Val</text><text x="897" y="633.500">de Loire</text><text x="741" y="639">Pays de</text><text x="741" y="653">la Loire</text><text x="1070" y="643">Bourgogne-</text><text x="1070" y="657">Franche-</text><text x="1070" y="671">Comté</text><text x="826.500" y="826">Nouvelle-</text><text x="826.500" y="840">Aquitaine</text><text x="1062" y="791">Auvergne-</text><text x="1062" y="805">Rhône-Alpes</text><text x="1140" y="889">Provence-</text><text x="1140" y="903">Alpes-Côte</text><text x="1140" y="917">d'Azur</text><text x="920" y="932.500">Occitanie</text><text x="489" y="957.500">Asturias /</text><text x="489" y="971.500">Asturies</text><text x="379" y="999">Galicia</text><text x="706" y="1005">Navarra</text>
          <text x="1293" y="390">Hessen</text><text x="1415" y="357">Thüringen</text><text x="1511" y="357" text-anchor="start">Sachsen</text><text x="1511" y="396.500" text-anchor="start">Severozápad</text><text x="1529" y="493.500" text-anchor="start">Jihozápad</text><text x="1449.500" y="524">Bayern</text><text x="1293" y="545.500">Baden-Württemberg</text><text x="1499" y="590.500" text-anchor="start">Oberösterreich</text><text x="1406" y="659">Tirol</text><text x="1535" y="699.500" text-anchor="start">Kärnten</text><text x="1409" y="714">Trentino-</text><text x="1409" y="728">Alto Adige/</text><text x="1409" y="742">Südtirol</text><text x="1456" y="778">Veneto</text><text x="1326" y="784">Lombardia</text><text x="1226" y="814">Piemonte</text><text x="1409" y="953">Toscana</text><text x="1142" y="533" text-anchor="end">Est</text>
        </g>
        </g>

        <g>
          <use href="#pinshadow" x="948" y="387"/><use href="#pinshadow" x="975" y="370"/><use href="#pinshadow" x="999" y="398"/><use href="#pinshadow" x="594" y="603"/><use href="#pinshadow" x="714.500" y="587"/><use href="#pinshadow" x="739.500" y="584.500"/><use href="#pinshadow" x="819" y="595.500"/><use href="#pinshadow" x="862.500" y="614.500"/><use href="#pinshadow" x="896" y="591"/><use href="#pinshadow" x="929" y="602"/><use href="#pinshadow" x="774" y="637"/><use href="#pinshadow" x="919.500" y="661"/><use href="#pinshadow" x="733" y="656"/><use href="#pinshadow" x="721" y="658"/><use href="#pinshadow" x="716" y="665.500"/><use href="#pinshadow" x="809" y="673"/><use href="#pinshadow" x="807" y="674"/><use href="#pinshadow" x="849.500" y="715.500"/><use href="#pinshadow" x="1162" y="567"/><use href="#pinshadow" x="1115" y="598"/><use href="#pinshadow" x="1147" y="680"/><use href="#pinshadow" x="1023.500" y="749.500"/><use href="#pinshadow" x="1069.500" y="771.500"/><use href="#pinshadow" x="1065" y="773.500"/><use href="#pinshadow" x="1122" y="786"/><use href="#pinshadow" x="1079" y="829"/><use href="#pinshadow" x="1075.500" y="850.500"/><use href="#pinshadow" x="763" y="943.500"/><use href="#pinshadow" x="879.500" y="936.500"/><use href="#pinshadow" x="882.500" y="939"/><use href="#pinshadow" x="1093.500" y="958"/><use href="#pinshadow" x="1182.500" y="937"/><use href="#pinshadow" x="1024" y="571"/><use href="#pinshadow" x="1137.500" y="504"/><use href="#pinshadow" x="1130" y="544"/>
        </g>
        <g>
          <use href="#pin" x="975" y="370"/><use href="#pin" x="948" y="387"/><use href="#pin" x="999" y="398"/><use href="#pin" x="864" y="480"/><use href="#pin" x="1135" y="491"/><use href="#pin" x="1137.500" y="504"/><use href="#pin" x="1130" y="544"/><use href="#pin" x="1162" y="567"/><use href="#pin" x="1024" y="571"/><use href="#pin" x="739.500" y="584.500"/><use href="#pin" x="714.500" y="587"/><use href="#pin" x="896" y="591"/><use href="#pin" x="819" y="595.500"/><use href="#pin" x="1115" y="598"/><use href="#pin" x="929" y="602"/><use href="#pin" x="594" y="602.500"/><use href="#pin" x="862.500" y="614.500"/><use href="#pin" x="774" y="637"/><use href="#pin" x="733" y="656.500"/><use href="#pin" x="721.500" y="658"/><use href="#pin" x="711" y="659"/><use href="#pin" x="919.500" y="660.500"/><use href="#pin" x="716" y="665"/><use href="#pin" x="809" y="673"/><use href="#pin" x="807" y="674"/><use href="#pin" x="1147" y="680"/><use href="#pin" x="849.500" y="715.500"/><use href="#pin" x="1023.500" y="749.500"/><use href="#pin" x="1069.500" y="771.500"/><use href="#pin" x="1065" y="773.500"/><use href="#pin" x="1122" y="786"/><use href="#pin" x="1079" y="829"/><use href="#pin" x="1075.500" y="850.500"/><use href="#pin" x="879.500" y="936.500"/><use href="#pin" x="1182.500" y="937"/><use href="#pin" x="882.500" y="939"/><use href="#pin" x="763" y="943.500"/><use href="#pin" x="1093.500" y="958"/>
        </g>
      </svg>
      <div class="zoom"><span>+</span><span>−</span></div>
      <div class="popup">
        <strong>CONCERT DU QUATUOR À CORDES LES AILES</strong>
        <p>Proposition de spectacle pour le catalogue culturel<br>du Loiret</p>
        <a>Voir détails</a>
        <svg class="close" width="16" height="16" viewBox="0 0 16 16"><path d="M1 1l14 14M15 1L1 15"/></svg>
        <svg class="tip" width="40" height="20" viewBox="0 0 40 20"><path d="M0 0H40L22 18Q20 20 18 18z"/></svg>
      </div>
    </div>
  </main>
</div>
</body>
</html>
```
FILE: styles.css
```css
* { box-sizing: border-box; }
body { margin: 0; width: 2648px; height: 1696px; overflow: hidden; display: flex; flex-direction: column; background: #f9fafc; font-family: "Liberation Sans", Arial, sans-serif; }
.icon { fill: none; stroke: currentColor; stroke-width: 2; stroke-linecap: round; stroke-linejoin: round; flex: none; }
.icon.thin { stroke-width: 1.7; }

.topbar { position: relative; z-index: 2; flex: none; height: 147px; padding: 0 20px 12px 24px; display: flex; align-items: center; justify-content: space-between; background: #fff; border-bottom: 2px solid #e5e7eb; box-shadow: 0 20px 30px -6px rgba(0,0,0,.12), 0 8px 12px -8px rgba(0,0,0,.12); color: #374151; }
.brand { font-size: 48px; font-weight: 700; color: #1f2937; }
.topnav { display: flex; gap: 64px; padding-right: 24px; font-size: 28px; }
.toplink, .user { display: flex; align-items: center; white-space: nowrap; }
.toplink { gap: 8px; }
.account { display: flex; align-items: center; gap: 56px; }
.user { gap: 16px; font-size: 32px; }
.logout { width: 216px; height: 116px; border: 0; border-radius: 12px; background: #de5c57; color: #fff; display: flex; align-items: center; justify-content: center; box-shadow: 0 2px 6px rgba(0,0,0,.2); padding: 0; }
.logout .thin { align-self: flex-start; margin-top: 34px; }

.shell { flex: 1; min-height: 0; display: flex; }
.sidebar { width: 504px; flex: none; background: #111825; color: #fff; }
.side-head { height: 162px; padding: 52px 40px 0; border-bottom: 2px solid #374151; font-size: 48px; line-height: 56px; font-weight: 700; letter-spacing: 1.2px; }
.side-nav { padding: 64px 32px 0 24px; display: flex; flex-direction: column; gap: 32px; }
.side-item { height: 104px; padding: 0 24px; display: flex; align-items: center; gap: 24px; border-radius: 16px; background: #222936; color: #d1d5db; font-size: 36px; }
.side-item.active { background: #3263e9; color: #fff; box-shadow: 0 8px 12px rgba(0,0,0,.15); }

.content { flex: 1; min-width: 0; padding: 48px 36px 0 48px; display: flex; flex-direction: column; }
.field { height: 84px; border: 2px solid #6b7280; border-radius: 16px; background: #fff; padding: 0 16px; display: flex; align-items: center; font-size: 32px; white-space: nowrap; }
.search { color: #6b7280; flex: none; }
.filters { display: flex; justify-content: space-between; padding-top: 36px; }
.filter { display: flex; flex-direction: column; gap: 20px; }
.label { font-size: 32px; line-height: 40px; color: #4b5563; }
.date { width: 302px; justify-content: space-between; padding-right: 23px; }
.date i { font-style: normal; padding: 0 2px; }
.select { width: 401px; justify-content: space-between; padding-right: 23px; }
.chevron { color: #6b7280; stroke-width: 4.5; }
h1 { margin: 28px 0 0; height: 100px; line-height: 88px; font-size: 71.5px; text-align: center; color: #1f2937; }

.map { position: relative; flex: 1; min-height: 0; overflow: hidden; background: #b2d2dd; }
.tiles { display: block; width: 2060px; height: 1109px; }
.coast { fill: #f2f0e5; stroke: #a99fb8; stroke-width: .8; }
.tex { fill: #fff; opacity: .75; }
.forest { fill: #cfe3bd; opacity: .6; filter: blur(9px); }
.po { fill: #f2eeea; opacity: .8; filter: blur(5px); }
.water { fill: #a9cfe0; }
.ice { fill: #a4cdf5; }
.major, .road, .admin, .country, .sea { fill: none; vector-effect: non-scaling-stroke; stroke-linejoin: round; }
.major { stroke: #e8a0af; stroke-width: 2.4; }
.road { stroke: #f5bba5; stroke-width: 2.2; }
.admin { stroke: #b3a3ba; stroke-width: 2.6; opacity: .8; }
.country { stroke: #a190ab; stroke-width: 5; opacity: .85; }
.sea { stroke: #9c97b3; stroke-width: 3.4; }
.dot { fill: #fff; stroke: #6b6b66; stroke-width: .9; }
.labels text { font-family: "Noto Sans", sans-serif; text-anchor: middle; paint-order: stroke; stroke: rgba(255,255,255,.65); stroke-width: 2px; stroke-linejoin: round; }
.labels text[text-anchor="start"] { text-anchor: start; }
.labels text[text-anchor="end"] { text-anchor: end; }
.city { fill: #3f3f3d; font-size: 11.9px; }
.city .mid { font-size: 13.2px; }
.city.big { font-size: 14.1px; }
.nation { fill: #7d5a87; font-size: 13.8px; letter-spacing: .85px; }
.region { fill: #92719d; font-size: 11.5px; font-style: italic; }
.region .upright { font-style: normal; }

.zoom { position: absolute; left: 20px; top: 20px; width: 68px; height: 128px; border: 4px solid rgba(0,0,0,.2); border-radius: 8px; background: #fff; background-clip: padding-box; display: flex; flex-direction: column; }
.zoom span { height: 60px; padding: 8px 0 0 2px; display: flex; align-items: center; justify-content: center; font-size: 49px; font-weight: 700; color: #000; line-height: 50px; }
.zoom span:first-child { border-bottom: 2px solid #ccc; padding-top: 11px; }
.popup { position: absolute; left: 670px; top: 145px; width: 694px; height: 191px; border-radius: 24px; background: #fff; box-shadow: 0 6px 28px rgba(0,0,0,.4); padding: 29px 42px; font-size: 26px; line-height: 33.8px; color: #333; white-space: nowrap; }
.popup strong { display: block; letter-spacing: -.06px; }
.popup p { margin: 0; letter-spacing: .17px; }
.popup a { color: #3279a8; }
.close { position: absolute; right: 16px; top: 18px; stroke: #757575; stroke-width: 2; }
.tip { position: absolute; left: 327px; top: 190px; fill: #fff; }
```
